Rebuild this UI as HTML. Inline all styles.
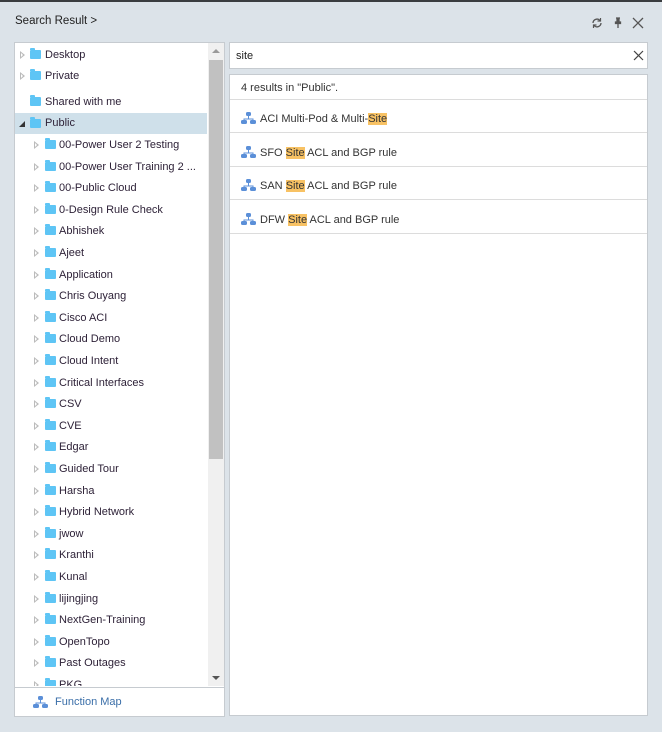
<!DOCTYPE html>
<html><head><meta charset="utf-8"><style>
*{box-sizing:border-box;margin:0;padding:0}
body{width:662px;height:732px;background:#dce3e9;font-family:"Liberation Sans",sans-serif;font-size:11px;color:#2e2238;position:relative;overflow:hidden}
.top{position:absolute;left:0;top:0;width:662px;height:2px;background:#3a3d40}
.title{position:absolute;left:15px;top:15px;font-size:11.5px;color:#222}
.left{position:absolute;left:14px;top:42px;width:211px;height:675px;background:#fff;border:1px solid #c6cbd0}
.clip{position:absolute;left:0;top:0;width:193px;height:643px;overflow:hidden}
.row{position:absolute;height:18px;line-height:18px;white-space:nowrap}
.arr{position:absolute;top:5px;width:0;height:0;border-top:4px solid transparent;border-bottom:4px solid transparent;border-left:5px solid #bbb}
.arr:after{content:"";position:absolute;left:-4px;top:-2px;border-top:2px solid transparent;border-bottom:2px solid transparent;border-left:2px solid #fff}
.fold{position:absolute;top:4px;width:11px;height:9px;background:#5ec5f5;border-radius:1px}
.fold:before{content:"";position:absolute;left:0;top:-2px;width:5px;height:2px;background:#5ec5f5;border-radius:1px 1px 0 0}
.sb{position:absolute;left:193px;top:0;width:16px;height:643px;background:#f0f0f0}
.thumb{position:absolute;left:1px;top:17px;width:14px;height:399px;background:#c1c1c1}
.bot{position:absolute;left:0;top:644px;width:209px;height:30px;border-top:1px solid #c6cbd0}
.search{position:absolute;left:229px;top:42px;width:419px;height:27px;background:#fff;border:1px solid #c6cbd0}
.res{position:absolute;left:229px;top:74px;width:419px;height:642px;background:#fff;border:1px solid #c6cbd0}
.ri{position:absolute;left:0;width:417px;height:33px;border-bottom:1px solid #dcdcdc;line-height:33px;padding-top:3px;padding-left:30px;white-space:nowrap;color:#333}
.hl{background:#f8c264}
.ic{position:absolute;left:11px;top:12px}
</style></head><body>
<div class="top"></div>
<div class="title">Search Result &gt;</div>
<svg style="position:absolute;left:591px;top:17px" width="12" height="12" viewBox="0 0 12 12"><path d="M2 6a4 4 0 0 1 7-2.5M10 6a4 4 0 0 1-7 2.5" stroke="#555" stroke-width="1.3" fill="none"/><path d="M9.5 1v3h-3M2.5 11V8h3" stroke="#555" stroke-width="1.2" fill="none"/></svg>
<svg style="position:absolute;left:613px;top:17px" width="10" height="12" viewBox="0 0 10 12"><path d="M3 1h4M4 1v4H2.5v1.5h5V5H6V1M5 6.5V11" stroke="#555" stroke-width="1.3" fill="#555"/></svg>
<svg style="position:absolute;left:632px;top:17px" width="12" height="12" viewBox="0 0 12 12"><path d="M1 1l10 10M11 1L1 11" stroke="#555" stroke-width="1.3"/></svg>

<div class="left">
<div class="clip">
<div class="row" style="left:0;top:3px"><span class="arr" style="left:5px"></span><span class="fold" style="left:15px"></span><span style="position:absolute;left:30px">Desktop</span></div>
<div class="row" style="left:0;top:24px"><span class="arr" style="left:5px"></span><span class="fold" style="left:15px"></span><span style="position:absolute;left:30px">Private</span></div>
<div class="row" style="left:0;top:50px"><span class="fold" style="left:15px"></span><span style="position:absolute;left:30px">Shared with me</span></div>
<div class="row" style="left:0;top:70px;width:192px;height:21px;background:#cfe0ea;line-height:21px"><span style="position:absolute;left:4px;top:8px;border-left:6px solid transparent;border-bottom:6px solid #333"></span><span class="fold" style="left:15px;top:6px"></span><span style="position:absolute;left:30px">Public</span></div>
<div id="kids"></div>
</div>
<div class="sb"><div style="position:absolute;left:4px;top:6px;border-left:4px solid transparent;border-right:4px solid transparent;border-bottom:4px solid #999"></div><div class="thumb"></div><div style="position:absolute;left:4px;top:633px;border-left:4px solid transparent;border-right:4px solid transparent;border-top:4px solid #555"></div></div>
<div class="bot">
<svg style="position:absolute;left:18px;top:8px" width="15" height="13" viewBox="0 0 15 13"><rect x="5" y="0" width="5" height="4" rx="1.5" fill="#5b8fd8"/><path d="M7.5 4v3M3 9V7h9v2" stroke="#5b8fd8" fill="none"/><rect x="0" y="8" width="6" height="4" rx="1.5" fill="#5b8fd8"/><rect x="9" y="8" width="6" height="4" rx="1.5" fill="#5b8fd8"/></svg>
<span style="position:absolute;left:40px;top:8px;color:#3a6ea8">Function Map</span></div>
</div>

<div class="search"><span style="position:absolute;left:6px;top:7px;color:#222">site</span>
<svg style="position:absolute;left:403px;top:7px" width="11" height="11" viewBox="0 0 11 11"><path d="M1 1l9 9M10 1L1 10" stroke="#444" stroke-width="1.2"/></svg></div>
<div class="res">
<div class="ri" style="top:0;height:25px;line-height:24px;padding-top:1px;padding-left:11px">4 results in "Public".</div>
<div class="ri" style="top:25px"><svg class="ic" width="15" height="13" viewBox="0 0 15 13"><rect x="5" y="0" width="5" height="4" rx="1.5" fill="#5b8fd8"/><path d="M7.5 4v3M3 9V7h9v2" stroke="#5b8fd8" fill="none"/><rect x="0" y="8" width="6" height="4" rx="1.5" fill="#5b8fd8"/><rect x="9" y="8" width="6" height="4" rx="1.5" fill="#5b8fd8"/></svg>ACI Multi-Pod &amp; Multi-<span class="hl">Site</span></div>
<div class="ri" style="top:59px"><svg class="ic" width="15" height="13" viewBox="0 0 15 13"><rect x="5" y="0" width="5" height="4" rx="1.5" fill="#5b8fd8"/><path d="M7.5 4v3M3 9V7h9v2" stroke="#5b8fd8" fill="none"/><rect x="0" y="8" width="6" height="4" rx="1.5" fill="#5b8fd8"/><rect x="9" y="8" width="6" height="4" rx="1.5" fill="#5b8fd8"/></svg>SFO <span class="hl">Site</span> ACL and BGP rule</div>
<div class="ri" style="top:92px"><svg class="ic" width="15" height="13" viewBox="0 0 15 13"><rect x="5" y="0" width="5" height="4" rx="1.5" fill="#5b8fd8"/><path d="M7.5 4v3M3 9V7h9v2" stroke="#5b8fd8" fill="none"/><rect x="0" y="8" width="6" height="4" rx="1.5" fill="#5b8fd8"/><rect x="9" y="8" width="6" height="4" rx="1.5" fill="#5b8fd8"/></svg>SAN <span class="hl">Site</span> ACL and BGP rule</div>
<div class="ri" style="top:126px"><svg class="ic" width="15" height="13" viewBox="0 0 15 13"><rect x="5" y="0" width="5" height="4" rx="1.5" fill="#5b8fd8"/><path d="M7.5 4v3M3 9V7h9v2" stroke="#5b8fd8" fill="none"/><rect x="0" y="8" width="6" height="4" rx="1.5" fill="#5b8fd8"/><rect x="9" y="8" width="6" height="4" rx="1.5" fill="#5b8fd8"/></svg>DFW <span class="hl">Site</span> ACL and BGP rule</div>
</div>
<script>
var n=["00-Power User 2 Testing","00-Power User Training 2 ...","00-Public Cloud","0-Design Rule Check","Abhishek","Ajeet","Application","Chris Ouyang","Cisco ACI","Cloud Demo","Cloud Intent","Critical Interfaces","CSV","CVE","Edgar","Guided Tour","Harsha","Hybrid Network","jwow","Kranthi","Kunal","lijingjing","NextGen-Training","OpenTopo","Past Outages","PKG"];
var h="";for(var i=0;i<n.length;i++){var t=93+i*21.6;h+='<div class="row" style="left:0;top:'+t+'px"><span class="arr" style="left:19px"></span><span class="fold" style="left:30px"></span><span style="position:absolute;left:44px">'+n[i]+'</span></div>';}
document.getElementById("kids").outerHTML=h;
</script>
</body></html>
